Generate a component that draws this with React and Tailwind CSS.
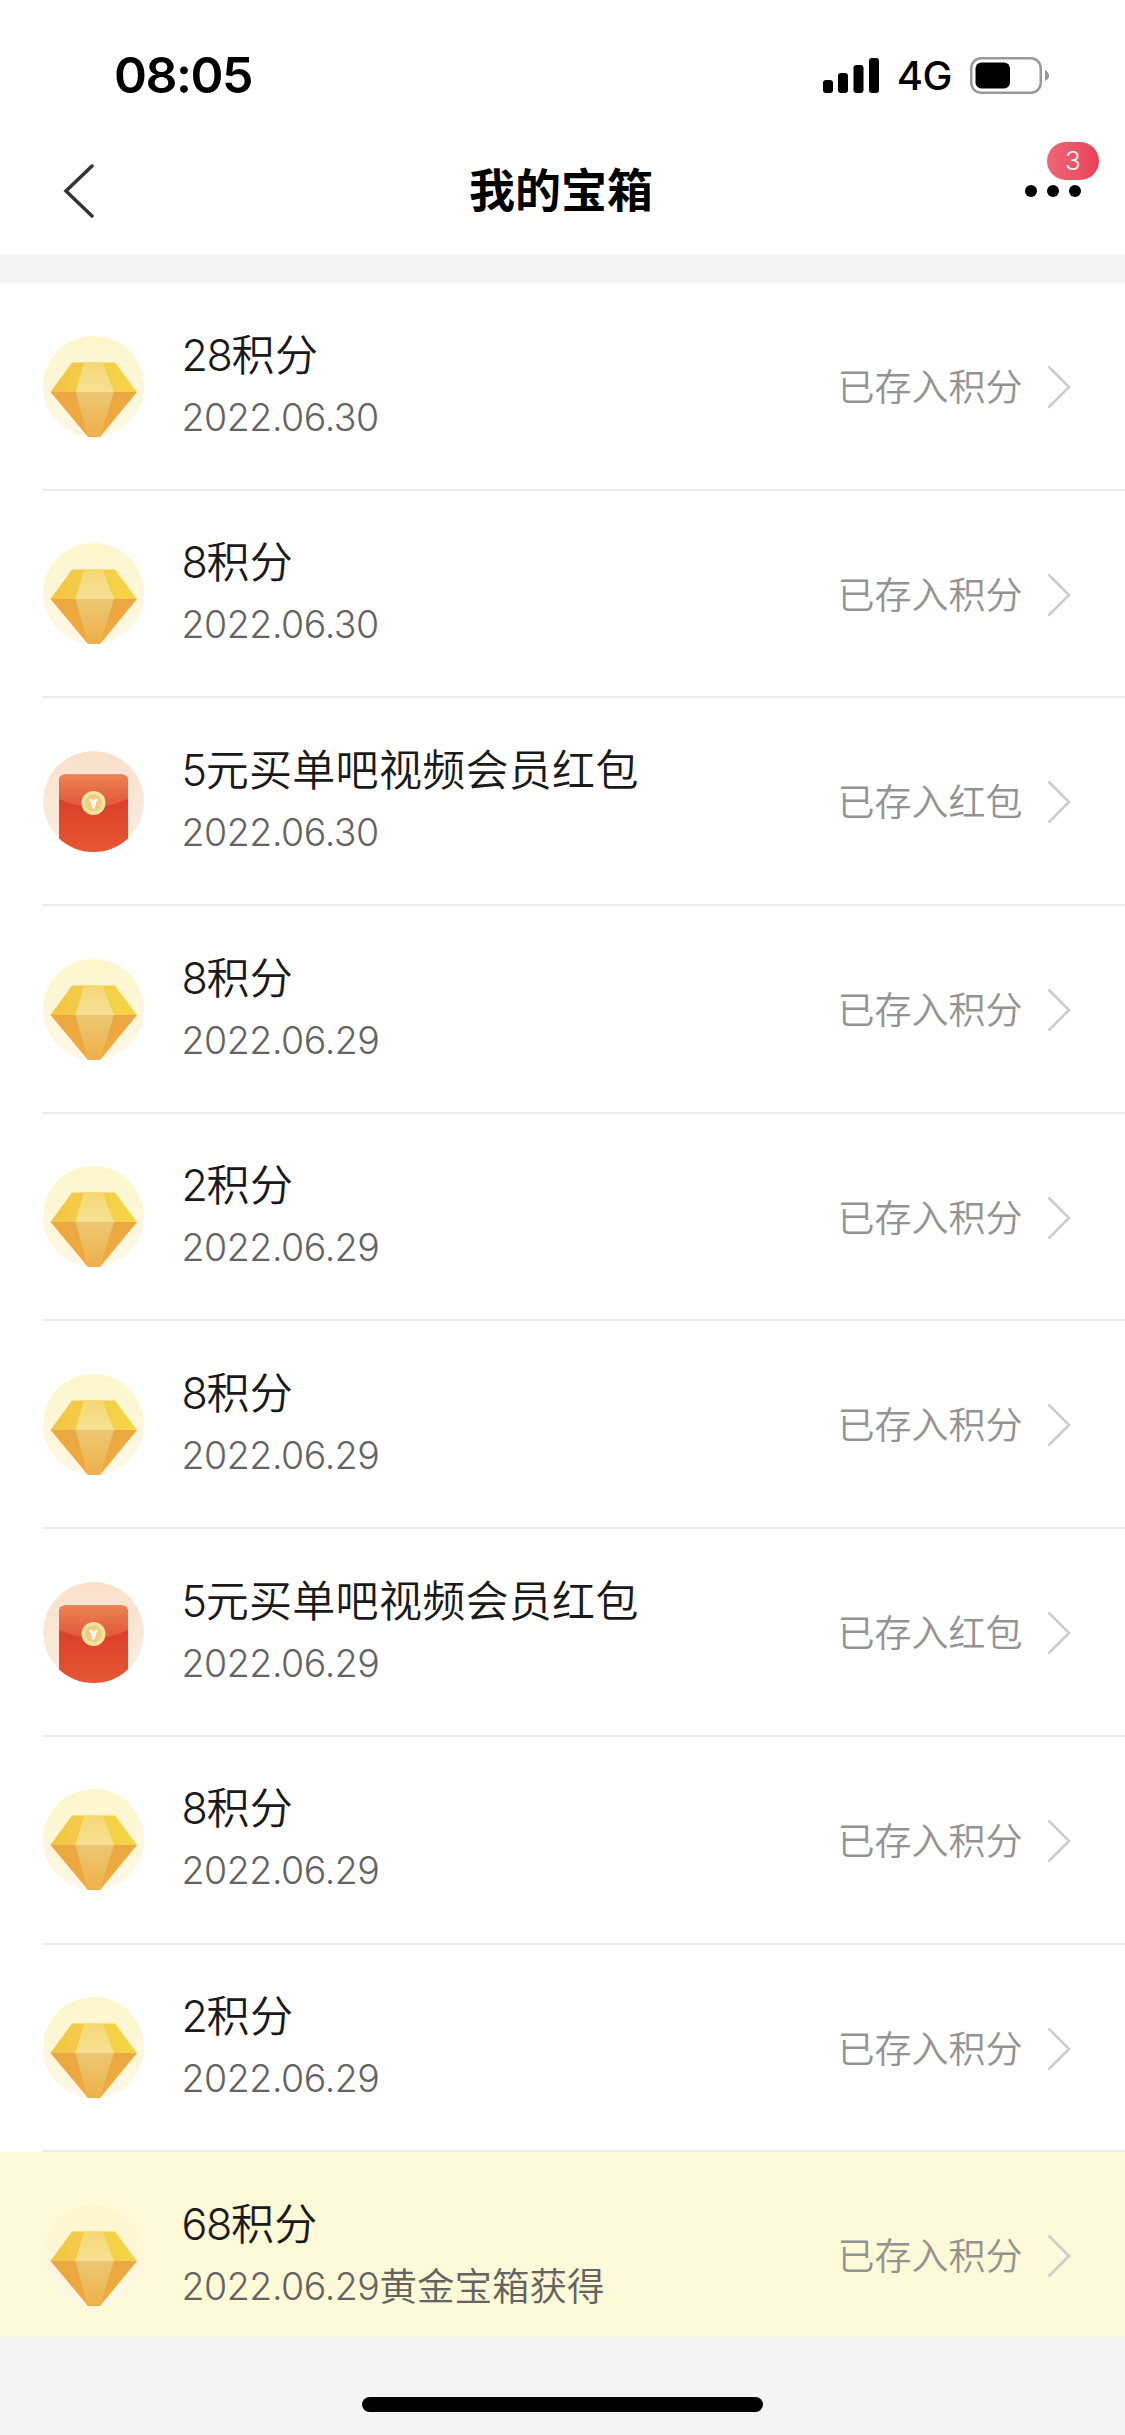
const REWARDS = [
  { amount: 28, name: "积分", date: "2022.06.30", type: "points" },
  { amount: 8, name: "积分", date: "2022.06.30", type: "points" },
  { amount: 5, name: "元买单吧视频会员红包", date: "2022.06.30", type: "packet" },
  { amount: 8, name: "积分", date: "2022.06.29", type: "points" },
  { amount: 2, name: "积分", date: "2022.06.29", type: "points" },
  { amount: 8, name: "积分", date: "2022.06.29", type: "points" },
  { amount: 5, name: "元买单吧视频会员红包", date: "2022.06.29", type: "packet" },
  { amount: 8, name: "积分", date: "2022.06.29", type: "points" },
  { amount: 2, name: "积分", date: "2022.06.29", type: "points" },
  { amount: 68, name: "积分", date: "2022.06.29", source: "黄金宝箱获得", type: "points", highlight: true },
];

const STATUS = { points: "已存入积分", packet: "已存入红包" };

const DiamondIcon = () => (
  <svg viewBox="0 0 101 101" className="h-[101px] w-[101px] shrink-0">
    <defs>
      <linearGradient id="halo" x1="0" y1="0" x2="0" y2="1">
        <stop offset="0" stopColor="#fdf6cb" />
        <stop offset="1" stopColor="#fef7e6" />
      </linearGradient>
      <linearGradient id="gemTop" x1="0" y1="0" x2="1" y2="0">
        <stop offset="0" stopColor="#f2c544" />
        <stop offset="1" stopColor="#f5d548" />
      </linearGradient>
      <linearGradient id="gemBottom" x1="0" y1="0" x2="0" y2="1">
        <stop offset="0" stopColor="#eba842" />
        <stop offset="1" stopColor="#f2a93c" />
      </linearGradient>
      <linearGradient id="gemFace" x1="0" y1="0" x2="0" y2="1">
        <stop offset="0" stopColor="#f5d874" />
        <stop offset="1" stopColor="#f6e096" />
      </linearGradient>
      <linearGradient id="gemCore" x1="0" y1="0" x2="0" y2="1">
        <stop offset="0" stopColor="#ebc772" />
        <stop offset="1" stopColor="#efb04b" />
      </linearGradient>
    </defs>
    <circle cx="50.5" cy="50.5" r="50.5" fill="url(#halo)" />
    <path d="M29 26.500H72L94 56H7.500Z" fill="url(#gemTop)" />
    <path d="M41 26.500H59.500L71 56H32.500Z" fill="url(#gemFace)" />
    <path d="M7.500 56H94L57 101H45Z" fill="url(#gemBottom)" />
    <path d="M32.500 56H71L57 101H45Z" fill="url(#gemCore)" />
  </svg>
);

const PacketIcon = () => (
  <svg viewBox="0 0 101 101" className="h-[101px] w-[101px] shrink-0">
    <defs>
      <linearGradient id="packetHalo" x1="0" y1="0" x2="0" y2="1">
        <stop offset="0" stopColor="#f9e0cb" />
        <stop offset="1" stopColor="#fbeee2" />
      </linearGradient>
      <linearGradient id="packetBody" x1="0" y1="0" x2="0" y2="1">
        <stop offset="0.3" stopColor="#dc3f26" />
        <stop offset="1" stopColor="#e95d3a" />
      </linearGradient>
      <linearGradient id="packetFlap" x1="0" y1="0" x2="0" y2="1">
        <stop offset="0" stopColor="#ec8350" />
        <stop offset="1" stopColor="#e2563a" />
      </linearGradient>
      <clipPath id="packetClip">
        <circle cx="50.5" cy="50.5" r="50.5" />
      </clipPath>
    </defs>
    <g clipPath="url(#packetClip)">
      <circle cx="50.5" cy="50.5" r="50.5" fill="url(#packetHalo)" />
      <rect x="16" y="23.5" width="69" height="90" rx="6" fill="url(#packetBody)" />
      <path d="M16 29.500a6 6 0 0 1 6-6H79a6 6 0 0 1 6 6V48Q50.500 64 16 48Z" fill="url(#packetFlap)" />
      <circle cx="50.5" cy="52" r="12" fill="#f8e3a0" />
      <circle cx="50.5" cy="52" r="8.500" fill="#f0cc80" />
      <path d="M47 48l3.500 4 3.500-4M50.500 52v5.500M48 53h5" stroke="#fffaf0" strokeWidth="3" fill="none" />
    </g>
  </svg>
);

const SignalIcon = () => (
  <svg viewBox="0 0 56 35" className="h-[35px] w-[56px]">
    <rect x="0" y="22" width="10" height="13" rx="3" />
    <rect x="15" y="15" width="10" height="20" rx="3" />
    <rect x="30.5" y="7" width="10" height="28" rx="3" />
    <rect x="46" y="0" width="10" height="35" rx="3" />
  </svg>
);

const BatteryIcon = () => (
  <svg viewBox="0 0 79 37" className="h-[37px] w-[79px]">
    <rect x="1.25" y="1.25" width="69.5" height="34.500" rx="10" fill="none" stroke="#999" strokeWidth="2.500" />
    <rect x="5.500" y="5.500" width="34.500" height="26" rx="6" />
    <path d="M75 13q4 2 4 5.500t-4 5.500z" fill="#999" />
  </svg>
);

const RewardRow = ({ amount, name, date, source, type, highlight }) => (
  <li
    className={`flex pl-[43px] ${
      highlight ? "h-[185px] bg-[#fef9d7]" : "h-[207.7px] bg-white"
    }`}
  >
    <div
      className={`flex flex-1 items-start ${
        highlight ? "" : "border-b-2 border-[#ececec]"
      }`}
    >
      <div className="pt-[52.5px]">
        {type === "points" ? <DiamondIcon /> : <PacketIcon />}
      </div>
      <div className="flex-1 pt-[39.5px] pl-[37.5px] font-[350]">
        <p className="text-[43px] leading-[64px] tracking-[0.3px] text-[#1a1a1a]">
          <span className="tracking-[-1.3px]">{amount}</span>
          {name}
        </p>
        <p className="text-[37.5px] leading-[62px] text-[#636363]">
          <span className="tracking-[-0.45px]">{date}</span>
          {source}
        </p>
      </div>
      <div className="flex items-center pt-[73px] pr-[54.5px]">
        <span className="pt-[2px] text-[37px] leading-[60px] font-[350] text-[#939393]">{STATUS[type]}</span>
        <svg viewBox="0 0 24 44" className="ml-[24px] h-[44px] w-[24px]">
          <path d="M1.500 1.500L22 22L1.500 42.500" fill="none" stroke="#ccc" strokeWidth="2.500" />
        </svg>
      </div>
    </div>
  </li>
);

export default function App() {
  return (
    <div className="flex h-[2435px] w-[1125px] flex-col overflow-hidden bg-[#f3f4f6] font-['Inter','Noto_Sans_CJK_SC',sans-serif]">
      <header className="h-[254px] bg-white">
        {/* Status bar */}
        <div className="flex h-[132px] items-center justify-between pt-[18px] pr-[76px] pl-[114px]">
          <span className="text-[50px] font-semibold tracking-[-1.5px]">08:05</span>
          <div className="flex items-center">
            <SignalIcon />
            <span className="mt-[2px] mr-[18px] ml-[18px] text-[40px] font-medium tracking-[-0.5px]">4G</span>
            <BatteryIcon />
          </div>
        </div>

        {/* Title bar */}
        <div className="flex h-[117px] items-center justify-between pr-[44px] pl-[63px]">
          <svg viewBox="0 0 32 54" className="h-[54px] w-[32px]">
            <path d="M29 2L3 27L29 52" fill="none" stroke="#333" strokeWidth="3.500" strokeLinecap="round" />
          </svg>
          <h1 className="pl-[2px] text-[46px] font-bold">我的宝箱</h1>
          <div className="relative flex gap-[10px]">
            <span className="h-3 w-3 rounded-full bg-black" />
            <span className="h-3 w-3 rounded-full bg-black" />
            <span className="h-3 w-3 rounded-full bg-black" />
            <span className="absolute -top-[43px] -right-[18px] flex h-[38px] w-[52px] items-center justify-center rounded-full bg-gradient-to-r from-[#ee6678] to-[#e94058] text-[26px] font-light text-white">
              3
            </span>
          </div>
        </div>
      </header>

      <ul className="mt-[29px]">
        {REWARDS.map((reward, index) => (
          <RewardRow key={index} {...reward} />
        ))}
      </ul>

      {/* Home indicator */}
      <div className="mt-[60px] h-[15px] w-[401px] self-center rounded-full bg-black" />
    </div>
  );
}
